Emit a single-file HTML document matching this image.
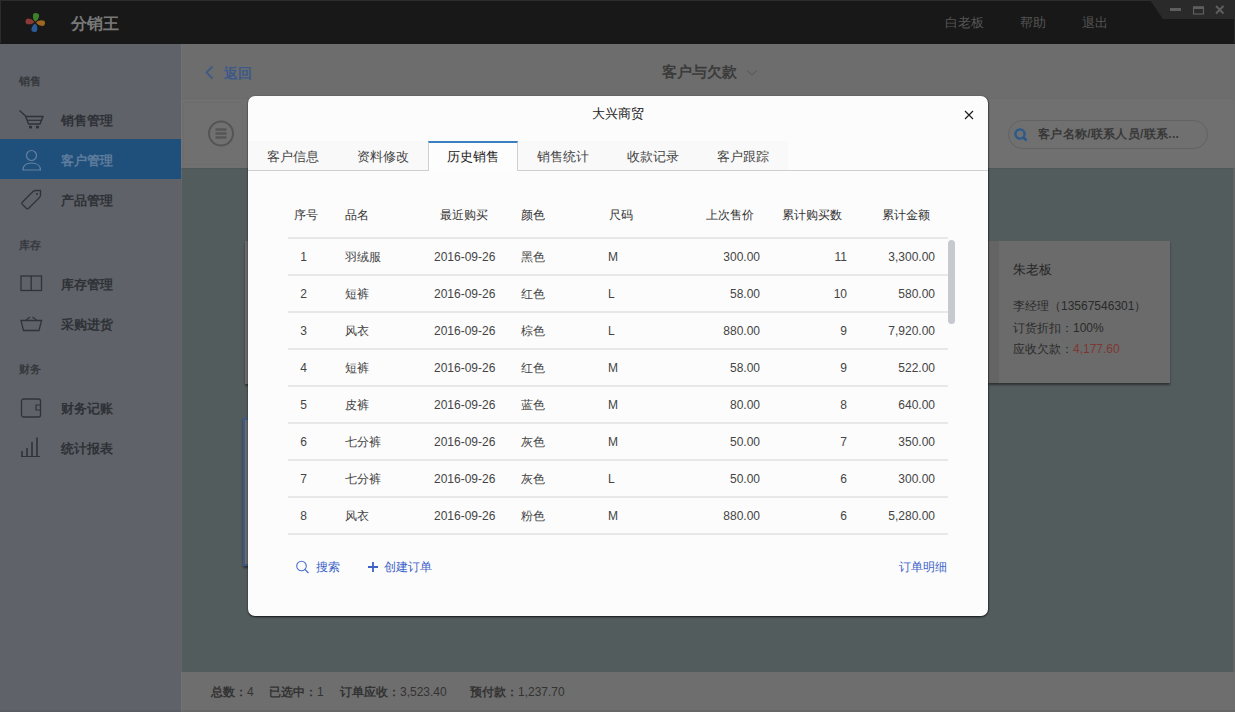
<!DOCTYPE html>
<html><head><meta charset="utf-8">
<style>
*{margin:0;padding:0;box-sizing:border-box}
html,body{width:1235px;height:712px;overflow:hidden;background:#525c5c}
body{position:relative;font-family:"Liberation Sans",sans-serif;color:#333}
.a{position:absolute}
.t{position:absolute;white-space:nowrap;line-height:1}
#titlebar{left:0;top:0;width:1235px;height:44px;background:#181818;z-index:2}
#sidebar{left:0;top:43px;width:181px;height:669px;background:#5f6268}
#header{left:181px;top:43px;width:1054px;height:56px;background:#6d6d6d;border-bottom:1px solid #6a6a6a}
#toolbar{left:181px;top:99px;width:1054px;height:69px;background:#707070}
#content{left:181px;top:168px;width:1054px;height:504px;background:#525c5c;border-top:1px solid #4e5656}
#footer{left:181px;top:672px;width:1054px;height:40px;background:#6e6e6e}
.card{background:#6b6b6b;box-shadow:0 1.5px 2px rgba(0,0,0,.45)}
#modal{left:248px;top:96px;width:740px;height:520px;background:#fcfcfc;border-radius:7px;box-shadow:0 1px 2px rgba(0,0,0,.75),1px 0 1px rgba(0,0,0,.25);overflow:hidden}
.tab{position:absolute;top:45px;width:90px;height:29px;background:#f9f9f9;font-size:13px;color:#444;text-align:center;line-height:31px}
.tab.act{background:#fdfdfd;border-top:2px solid #3a7fc0;border-left:1px solid #d0d0d0;border-right:1px solid #d0d0d0;color:#222;height:30px;line-height:28px}
.hd{position:absolute;top:113px;font-size:12px;color:#333;line-height:1}
.row{position:absolute;left:40px;width:660px;height:37px;border-top:2px solid #e8e8e8}
.row span{position:absolute;top:0;line-height:36px;font-size:12px;color:#444;white-space:nowrap}
</style></head><body>
<div id="titlebar" class="a">
  <div class="a" style="left:0;top:0;width:1235px;height:1px;background:#2c2c2c"></div>
  <div class="a" style="left:0;top:0;width:1px;height:43px;background:#2c2c2c"></div>
  <svg class="a" style="left:23px;top:11px" width="24" height="23" viewBox="0 0 24 23">
    <path d="M12.5 10.5C9.5 9 9.5 4.5 10.5 2.5C12 1.5 15 2 16 3.5C16.5 6 15 9 12.5 10.5Z" fill="#3d7f2a"/>
    <path d="M13 11.5C15 9 19.5 8.5 21.5 10C22.5 12 22 14.5 20 15C17.5 15 14.5 14 13 11.5Z" fill="#a0651e"/>
    <path d="M12 12.5C14.5 14 15 18.5 13.5 20.5C12 21.5 9 21 8.5 19.5C8 17 9.5 14 12 12.5Z" fill="#2b5a96"/>
    <path d="M11.5 11C9.5 13.5 5 14 3 12.5C2 10.5 2.5 8 4.5 7.5C7 7.5 10 8.5 11.5 11Z" fill="#8a3935"/>
  </svg>
  <div class="t" style="left:71px;top:16px;font-size:16px;font-weight:bold;color:#787878">分销王</div>
  <div class="t" style="left:945px;top:16px;font-size:13px;color:#555">白老板</div>
  <div class="t" style="left:1020px;top:16px;font-size:13px;color:#555">帮助</div>
  <div class="t" style="left:1082px;top:16px;font-size:13px;color:#555">退出</div>
  <svg class="a" style="left:1150px;top:0" width="85" height="19" viewBox="0 0 85 19"><path d="M0 0H85V19H13Z" fill="#2a2a2a"/>
    <rect x="20" y="8" width="11" height="3" fill="#5e5e5e"/>
    <rect x="43.5" y="7" width="10" height="7" fill="none" stroke="#5e5e5e" stroke-width="1.2"/><rect x="43" y="6.5" width="11" height="2.5" fill="#5e5e5e"/>
    <path d="M66 6L73.5 13.5M73.5 6L66 13.5" stroke="#5e5e5e" stroke-width="2"/>
  </svg>
  <div class="a" style="left:1234px;top:0;width:1px;height:43px;background:#2a2a2a"></div>
</div>
<div id="sidebar" class="a">
  <div class="t" style="left:19px;top:33px;font-size:11px;font-weight:bold;color:#36393e">销售</div>
  <svg class="a" style="left:18px;top:65px" width="28" height="22" viewBox="0 0 28 22"><path d="M1.5 2.5L7.5 8L10.5 16H22L25 8.5H7.5" fill="none" stroke="#2f3237" stroke-width="1.4" stroke-linejoin="round"/><path d="M9 12.3H23.5" stroke="#2f3237" stroke-width="1.2"/><rect x="11" y="17.8" width="3" height="2.6" fill="#2f3237"/><rect x="18" y="17.8" width="3" height="2.6" fill="#2f3237"/></svg>
  <div class="t" style="left:61px;top:71px;font-size:13px;font-weight:bold;color:#2e3136">销售管理</div>
  <div class="a" style="left:0;top:96px;width:181px;height:40px;background:#1f4f7b"></div>
  <svg class="a" style="left:21px;top:105px" width="22" height="24" viewBox="0 0 22 24"><circle cx="10.5" cy="7.5" r="5" fill="none" stroke="#6480a0" stroke-width="1.2"/><path d="M2 22C2 17 6 15 10.5 15C15 15 19.5 17 19.5 22Z" fill="none" stroke="#6480a0" stroke-width="1.2"/></svg>
  <div class="t" style="left:61px;top:111px;font-size:13px;font-weight:bold;color:#5f7d9c">客户管理</div>
  <svg class="a" style="left:19px;top:143px" width="26" height="24" viewBox="0 0 26 24"><path d="M3.5 16L14 5.5C15 4.5 16 4.5 17 4.5H21.5V9C21.5 10 21 11 20.5 11.5L10 22C9 23 8 23 7 22L3.5 18.5C2.5 17.5 2.5 17 3.5 16Z" fill="none" stroke="#303338" stroke-width="1.3"/><circle cx="18" cy="8" r="1" fill="#303338"/></svg>
  <div class="t" style="left:61px;top:151px;font-size:13px;font-weight:bold;color:#2e3136">产品管理</div>
  <div class="t" style="left:19px;top:197px;font-size:11px;font-weight:bold;color:#36393e">库存</div>
  <svg class="a" style="left:19px;top:231px" width="24" height="18" viewBox="0 0 24 18"><rect x="2" y="2" width="20.5" height="14.5" fill="none" stroke="#303338" stroke-width="1.3"/><path d="M12.2 2V16.5" stroke="#303338" stroke-width="1.3"/></svg>
  <div class="t" style="left:61px;top:235px;font-size:13px;font-weight:bold;color:#2e3136">库存管理</div>
  <svg class="a" style="left:19px;top:271px" width="24" height="18" viewBox="0 0 24 18"><path d="M2 6.5H22.5L20 16.5H4.5Z" fill="none" stroke="#303338" stroke-width="1.3"/><path d="M7 6L11 3M17.5 6L13.5 3" stroke="#303338" stroke-width="1.2"/></svg>
  <div class="t" style="left:61px;top:275px;font-size:13px;font-weight:bold;color:#2e3136">采购进货</div>
  <div class="t" style="left:19px;top:321px;font-size:11px;font-weight:bold;color:#36393e">财务</div>
  <svg class="a" style="left:19px;top:354px" width="24" height="22" viewBox="0 0 24 22"><rect x="2.5" y="2" width="19" height="18" rx="2" fill="none" stroke="#303338" stroke-width="1.3"/><path d="M21.5 8H17V13H21.5" fill="none" stroke="#303338" stroke-width="1.2"/></svg>
  <div class="t" style="left:61px;top:359px;font-size:13px;font-weight:bold;color:#2e3136">财务记账</div>
  <svg class="a" style="left:19px;top:393px" width="24" height="22" viewBox="0 0 24 22"><path d="M3 20V15M8 20V12M13 20V6M18 20V1.5" stroke="#303338" stroke-width="1.6"/><path d="M2 20.5H21" stroke="#303338" stroke-width="1"/></svg>
  <div class="t" style="left:61px;top:399px;font-size:13px;font-weight:bold;color:#2e3136">统计报表</div>
</div>
<div id="header" class="a">
  <svg class="a" style="left:23px;top:22px" width="12" height="16" viewBox="0 0 12 16"><path d="M8.5 1.5L2.5 7.5L8.5 13.5" fill="none" stroke="#3f5a85" stroke-width="1.8"/></svg>
  <div class="t" style="left:43px;top:23px;font-size:14px;font-weight:bold;color:#3d5a88">返回</div>
  <div class="t" style="left:481px;top:21px;font-size:15px;font-weight:bold;color:#3b3b3b">客户与欠款</div>
  <svg class="a" style="left:565px;top:26px" width="12" height="8" viewBox="0 0 12 8"><path d="M1.5 1.5L6 6L10.5 1.5" fill="none" stroke="#5d5d5d" stroke-width="1.3"/></svg>
</div>
<div id="toolbar" class="a">
  <div class="a" style="left:2px;top:3px;width:60px;height:63px;border:1px solid #6d6d6d"></div>
  <svg class="a" style="left:26px;top:20px" width="28" height="28" viewBox="0 0 28 28"><circle cx="14" cy="14.5" r="12" fill="none" stroke="#555" stroke-width="2"/><path d="M8.5 10.5H19.5M8.5 14.5H19.5M8.5 18.5H19.5" stroke="#555" stroke-width="2.5"/></svg>
  <div class="a" style="left:827px;top:21px;width:200px;height:29px;border:1px solid #626262;border-radius:15px"></div>
  <svg class="a" style="left:832px;top:28px" width="16" height="16" viewBox="0 0 16 16"><circle cx="7" cy="7" r="4.6" fill="none" stroke="#2a5a8a" stroke-width="2.4"/><path d="M10.2 10.2L13.5 13.5" stroke="#2a5a8a" stroke-width="2.6"/></svg>
  <div class="t" style="left:857px;top:29px;font-size:12px;font-weight:bold;color:#383838;letter-spacing:0.3px">客户名称/联系人员/联系...</div>
</div>
<div id="content" class="a">
  <div class="a card" style="left:64px;top:72px;width:300px;height:143px"></div>
  <div class="a card" style="left:62px;top:249px;width:300px;height:148px;border:2px solid #3d5a85"></div>
  <div class="a card" style="left:807px;top:72px;width:182px;height:142px">
    <div class="a" style="left:0;top:0;width:11px;height:142px;background:#646464"></div>
    <div class="t" style="left:25px;top:22px;font-size:13px;color:#262626">朱老板</div>
    <div class="t" style="left:25px;top:59px;font-size:12px;color:#2a2a2a">李经理（13567546301）</div>
    <div class="t" style="left:25px;top:81px;font-size:12px;color:#2a2a2a">订货折扣：100%</div>
    <div class="t" style="left:25px;top:102px;font-size:12px;color:#2a2a2a">应收欠款：<span style="color:#7e3833">4,177.60</span></div>
  </div>
</div>
<div id="footer" class="a">
  <div class="t" style="left:30px;top:14px;font-size:12px;color:#333"><b>总数：</b>4</div>
  <div class="t" style="left:88px;top:14px;font-size:12px;color:#333"><b>已选中：</b>1</div>
  <div class="t" style="left:159px;top:14px;font-size:12px;color:#333"><b>订单应收：</b>3,523.40</div>
  <div class="t" style="left:289px;top:14px;font-size:12px;color:#333"><b>预付款：</b>1,237.70</div>
</div>

<div class="a" style="left:1233px;top:44px;width:2px;height:668px;background:rgba(110,110,110,.55)"></div>
<div class="a" style="left:0;top:710px;width:1235px;height:2px;background:rgba(0,0,0,.06)"></div>
<div class="a" style="left:181px;top:44px;width:1px;height:668px;background:rgba(120,120,125,.4)"></div>
<div id="modal" class="a">
  <div class="t" style="left:0;width:740px;text-align:center;top:11px;font-size:13px;color:#222">大兴商贸</div>
  <div class="a" style="left:0;top:74px;width:740px;height:1px;background:#cfcfcf"></div>
  <div class="tab" style="left:0">客户信息</div>
  <div class="tab" style="left:90px">资料修改</div>
  <div class="tab act" style="left:180px">历史销售</div>
  <div class="tab" style="left:270px">销售统计</div>
  <div class="tab" style="left:360px">收款记录</div>
  <div class="tab" style="left:450px">客户跟踪</div>

  <div class="hd" style="left:46px">序号</div>
  <div class="hd" style="left:97px">品名</div>
  <div class="hd" style="left:192px">最近购买</div>
  <div class="hd" style="left:273px">颜色</div>
  <div class="hd" style="left:361px">尺码</div>
  <div class="hd" style="left:458px">上次售价</div>
  <div class="hd" style="left:534px">累计购买数</div>
  <div class="hd" style="left:634px">累计金额</div>
<div class="row" style="top:141px"><span style="left:0;width:31px;text-align:center">1</span><span style="left:57px">羽绒服</span><span style="left:146px">2016-09-26</span><span style="left:233px">黑色</span><span style="left:320px">M</span><span style="right:188px">300.00</span><span style="right:101px">11</span><span style="right:13px">3,300.00</span></div>
<div class="row" style="top:178px"><span style="left:0;width:31px;text-align:center">2</span><span style="left:57px">短裤</span><span style="left:146px">2016-09-26</span><span style="left:233px">红色</span><span style="left:320px">L</span><span style="right:188px">58.00</span><span style="right:101px">10</span><span style="right:13px">580.00</span></div>
<div class="row" style="top:215px"><span style="left:0;width:31px;text-align:center">3</span><span style="left:57px">风衣</span><span style="left:146px">2016-09-26</span><span style="left:233px">棕色</span><span style="left:320px">L</span><span style="right:188px">880.00</span><span style="right:101px">9</span><span style="right:13px">7,920.00</span></div>
<div class="row" style="top:252px"><span style="left:0;width:31px;text-align:center">4</span><span style="left:57px">短裤</span><span style="left:146px">2016-09-26</span><span style="left:233px">红色</span><span style="left:320px">M</span><span style="right:188px">58.00</span><span style="right:101px">9</span><span style="right:13px">522.00</span></div>
<div class="row" style="top:289px"><span style="left:0;width:31px;text-align:center">5</span><span style="left:57px">皮裤</span><span style="left:146px">2016-09-26</span><span style="left:233px">蓝色</span><span style="left:320px">M</span><span style="right:188px">80.00</span><span style="right:101px">8</span><span style="right:13px">640.00</span></div>
<div class="row" style="top:326px"><span style="left:0;width:31px;text-align:center">6</span><span style="left:57px">七分裤</span><span style="left:146px">2016-09-26</span><span style="left:233px">灰色</span><span style="left:320px">M</span><span style="right:188px">50.00</span><span style="right:101px">7</span><span style="right:13px">350.00</span></div>
<div class="row" style="top:363px"><span style="left:0;width:31px;text-align:center">7</span><span style="left:57px">七分裤</span><span style="left:146px">2016-09-26</span><span style="left:233px">灰色</span><span style="left:320px">L</span><span style="right:188px">50.00</span><span style="right:101px">6</span><span style="right:13px">300.00</span></div>
<div class="row" style="top:400px"><span style="left:0;width:31px;text-align:center">8</span><span style="left:57px">风衣</span><span style="left:146px">2016-09-26</span><span style="left:233px">粉色</span><span style="left:320px">M</span><span style="right:188px">880.00</span><span style="right:101px">6</span><span style="right:13px">5,280.00</span></div>
<div class="a" style="left:40px;top:437px;width:660px;height:2px;background:#e8e8e8"></div>
<div class="a" style="left:700px;top:144px;width:7px;height:84px;border-radius:4px;background:#c6c9cd"></div>
  <svg class="a" style="left:46px;top:462px" width="16" height="16" viewBox="0 0 16 16"><circle cx="7.5" cy="8" r="4.8" fill="none" stroke="#4a6fd0" stroke-width="1.1"/><line x1="11" y1="11.5" x2="14.5" y2="15" stroke="#4a6fd0" stroke-width="1.2"/></svg>
  <div class="t" style="left:68px;top:465px;font-size:12px;color:#3d63c9">搜索</div>
  <svg class="a" style="left:119px;top:465px" width="12" height="12" viewBox="0 0 12 12"><path d="M6 1V11M1 6H11" stroke="#3d63c9" stroke-width="1.8"/></svg>
  <div class="t" style="left:136px;top:465px;font-size:12px;color:#3d63c9">创建订单</div>
  <div class="t" style="right:41px;top:465px;font-size:12px;color:#3d63c9">订单明细</div>
  <svg class="a" style="left:715px;top:13px" width="12" height="12" viewBox="0 0 12 12"><path d="M2 2L10 10M10 2L2 10" stroke="#1a1a1a" stroke-width="1.1"/></svg>
</div>
</body></html>
